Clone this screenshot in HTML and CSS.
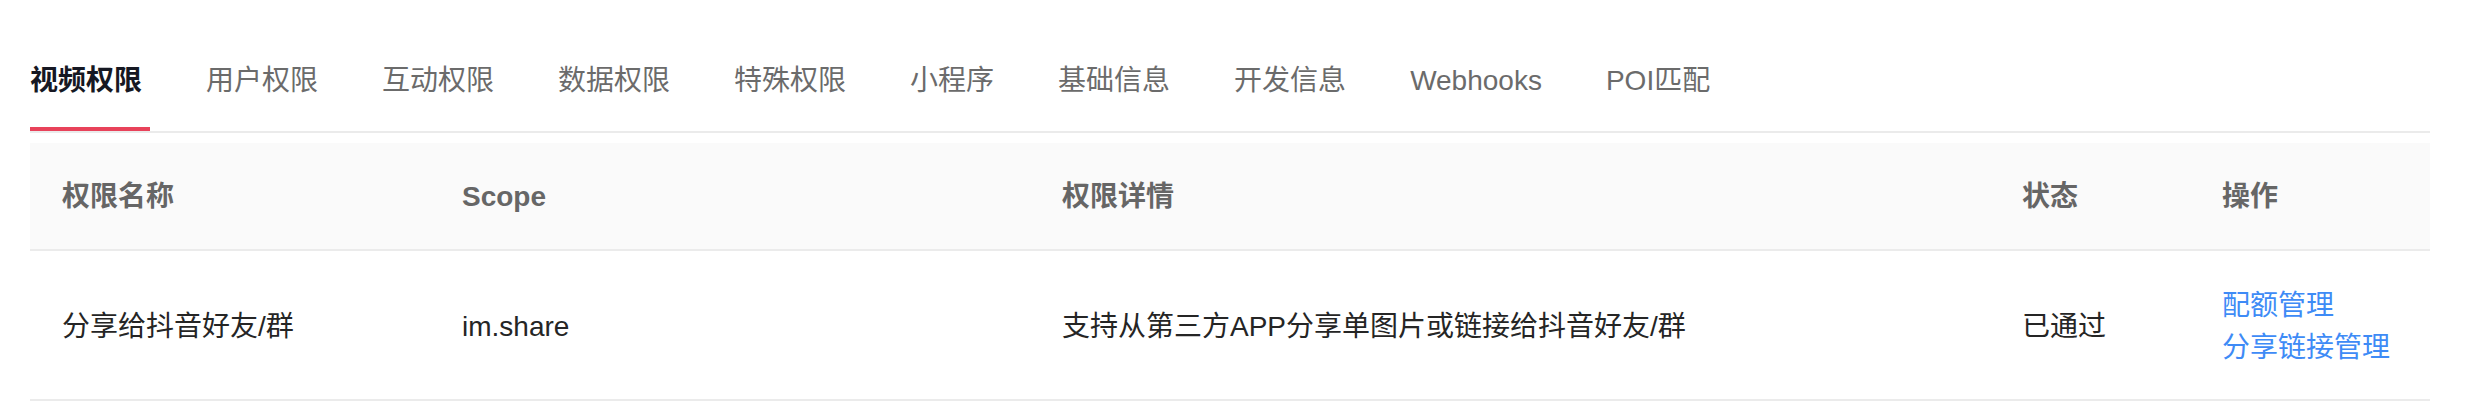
FILE: index.html
```html
<!DOCTYPE html>
<html lang="zh-CN">
<head>
    <meta charset="UTF-8">
    <title>权限管理</title>
    <link rel="stylesheet" href="styles.css">
</head>
<body>
    <div class="page">
        <div class="tabs">
            <div class="tab active">视频权限</div>
            <div class="tab">用户权限</div>
            <div class="tab">互动权限</div>
            <div class="tab">数据权限</div>
            <div class="tab">特殊权限</div>
            <div class="tab">小程序</div>
            <div class="tab">基础信息</div>
            <div class="tab">开发信息</div>
            <div class="tab">Webhooks</div>
            <div class="tab">POI匹配</div>
        </div>

        <table class="scope-table">
            <colgroup>
                <col class="col-name">
                <col class="col-scope">
                <col class="col-detail">
                <col class="col-status">
                <col class="col-action">
            </colgroup>
            <thead>
                <tr>
                    <th>权限名称</th>
                    <th>Scope</th>
                    <th>权限详情</th>
                    <th>状态</th>
                    <th>操作</th>
                </tr>
            </thead>
            <tbody>
                <tr>
                    <td>分享给抖音好友/群</td>
                    <td>im.share</td>
                    <td>支持从第三方APP分享单图片或链接给抖音好友/群</td>
                    <td>已通过</td>
                    <td>
                        <a class="link" href="#">配额管理</a>
                        <a class="link" href="#">分享链接管理</a>
                    </td>
                </tr>
            </tbody>
        </table>
    </div>
</body>
</html>
```

FILE: styles.css
```css
body {
    margin: 0;
    background: #fff;
    font-family: "Liberation Sans", "Noto Sans CJK SC", sans-serif;
}
.page {
    padding: 30px 44px 0 30px;
}
.tabs {
    display: flex;
    gap: 64px;
    border-bottom: 2px solid #ebebeb;
}
.tab {
    position: relative;
    padding: 31px 0 30px;
    font-size: 28px;
    line-height: 40px;
    color: #6b6b6b;
    white-space: nowrap;
}
.tab.active {
    color: #161823;
    font-weight: 600;
}
.tab.active::after {
    content: "";
    position: absolute;
    left: 0;
    bottom: 0;
    width: 120px;
    height: 4px;
    background: #e8425a;
}
.scope-table {
    width: 2400px;
    margin-top: 10px;
    border-collapse: collapse;
    table-layout: fixed;
    font-size: 28px;
}
.col-name { width: 400px; }
.col-scope { width: 600px; }
.col-detail { width: 960px; }
.col-status { width: 200px; }
.col-action { width: 240px; }
.scope-table th {
    background: #fafafa;
    color: #666;
    font-weight: 600;
    text-align: left;
    padding: 34px 32px 32px;
    line-height: 40px;
    border-bottom: 2px solid #ebebeb;
}
.scope-table td {
    color: #252525;
    padding: 34px 32px 30px;
    line-height: 42px;
    vertical-align: middle;
    border-bottom: 2px solid #ebebeb;
}
.link {
    display: block;
    color: #3e8bf6;
    text-decoration: none;
    white-space: nowrap;
}
```
